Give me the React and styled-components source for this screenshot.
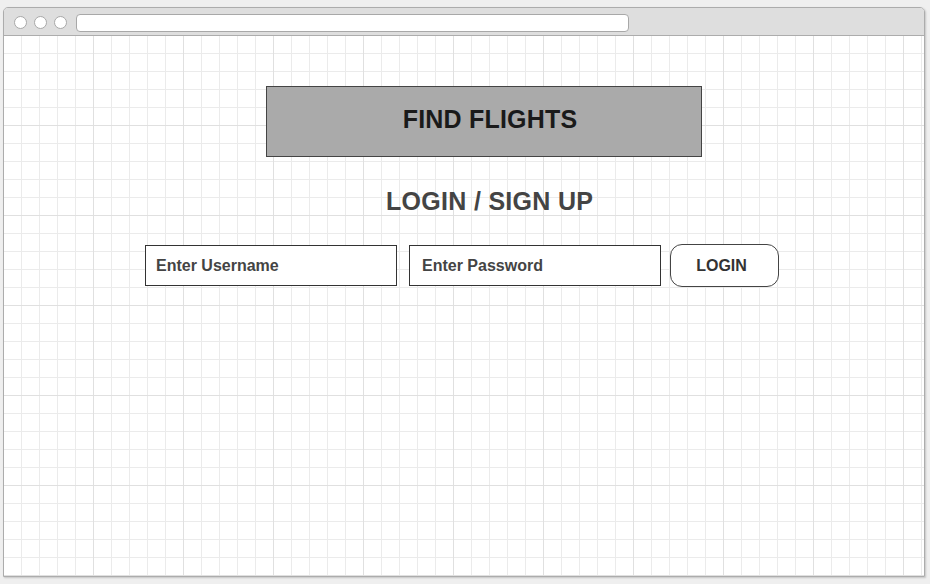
import React from "react";
import styled, { createGlobalStyle } from "styled-components";

const GlobalStyle = createGlobalStyle`
  html, body {
    margin: 0;
    padding: 0;
    background: #efefef;
    font-family: "Liberation Sans", Arial, sans-serif;
  }
`;

const Page = styled.div`
  padding: 7px 5px 7px 3px;
`;

const Window = styled.div`
  width: 922px;
  height: 570px;
  box-sizing: border-box;
  border: 1px solid #acacac;
  border-radius: 5px 5px 0 0;
  box-shadow: 1px 1px 2px rgba(0, 0, 0, 0.18);
  display: flex;
  flex-direction: column;
  overflow: hidden;
`;

const TitleBar = styled.div`
  height: 28px;
  box-sizing: border-box;
  flex-shrink: 0;
  background: #dedede;
  border-bottom: 1px solid #acacac;
  display: flex;
  align-items: center;
  padding: 2px 0 0 10px;
`;

const Dot = styled.span`
  width: 13px;
  height: 13px;
  box-sizing: border-box;
  border-radius: 50%;
  background: #fff;
  border: 1px solid #a8a8a8;
  margin-right: 7px;
`;

const UrlBar = styled.div`
  width: 553px;
  height: 18px;
  box-sizing: border-box;
  margin-left: 2px;
  background: #fff;
  border: 1px solid #a8a8a8;
  border-radius: 4px;
`;

const Canvas = styled.div`
  flex: 1;
  background-color: #fff;
  background-image:
    linear-gradient(to right, #e0e0e0 1px, transparent 1px),
    linear-gradient(to bottom, #e0e0e0 1px, transparent 1px),
    linear-gradient(to right, #ebebeb 1px, transparent 1px),
    linear-gradient(to bottom, #ebebeb 1px, transparent 1px);
  background-size: 90px 90px, 90px 90px, 18px 18px, 18px 18px;
  background-position: -1px -1px;
  display: flex;
  flex-direction: column;
  align-items: flex-start;
  padding-top: 50px;
`;

const Banner = styled.div`
  width: 436px;
  height: 71px;
  box-sizing: border-box;
  margin-left: 262px;
  background: #aaaaaa;
  border: 1px solid #444;
  display: flex;
  align-items: center;
  justify-content: center;
  padding: 0 0 5px 12px;
  font-size: 25px;
  font-weight: 700;
  letter-spacing: 0.2px;
  color: #1a1a1a;
`;

const Heading = styled.h2`
  margin: 32px 0 0 382px;
  font-size: 25px;
  line-height: 25px;
  font-weight: 700;
  letter-spacing: 0.3px;
  color: #444;
`;

const FormRow = styled.div`
  margin: 30px 0 0 141px;
  display: flex;
  align-items: center;
`;

const Field = styled.input`
  width: 252px;
  height: 41px;
  box-sizing: border-box;
  border: 1px solid #333;
  border-radius: 0;
  background: #fff;
  margin-right: ${(p) => p.$gap}px;
  padding: 0 0 0 ${(p) => p.$indent}px;
  font-family: "Liberation Sans", Arial, sans-serif;
  font-size: 16px;
  font-weight: 700;
  color: #444;
  outline: none;

  &::placeholder {
    color: #444;
    opacity: 1;
  }
`;

const LoginButton = styled.button`
  width: 109px;
  height: 43px;
  box-sizing: border-box;
  border: 1px solid #444;
  border-radius: 12px;
  background: #fff;
  font-family: "Liberation Sans", Arial, sans-serif;
  font-size: 16px;
  font-weight: 700;
  color: #333;
  padding: 1px 6px 0 0;
  cursor: pointer;
`;

export default function App() {
  return (
    <>
      <GlobalStyle />
      <Page>
        <Window>
          <TitleBar>
            <Dot />
            <Dot />
            <Dot />
            <UrlBar />
          </TitleBar>
          <Canvas>
            <Banner>FIND FLIGHTS</Banner>
            <Heading>LOGIN / SIGN UP</Heading>
            <FormRow>
              <Field type="text" placeholder="Enter Username" $gap={12} $indent={10} />
              <Field type="password" placeholder="Enter Password" $gap={9} $indent={12} />
              <LoginButton>LOGIN</LoginButton>
            </FormRow>
          </Canvas>
        </Window>
      </Page>
    </>
  );
}
